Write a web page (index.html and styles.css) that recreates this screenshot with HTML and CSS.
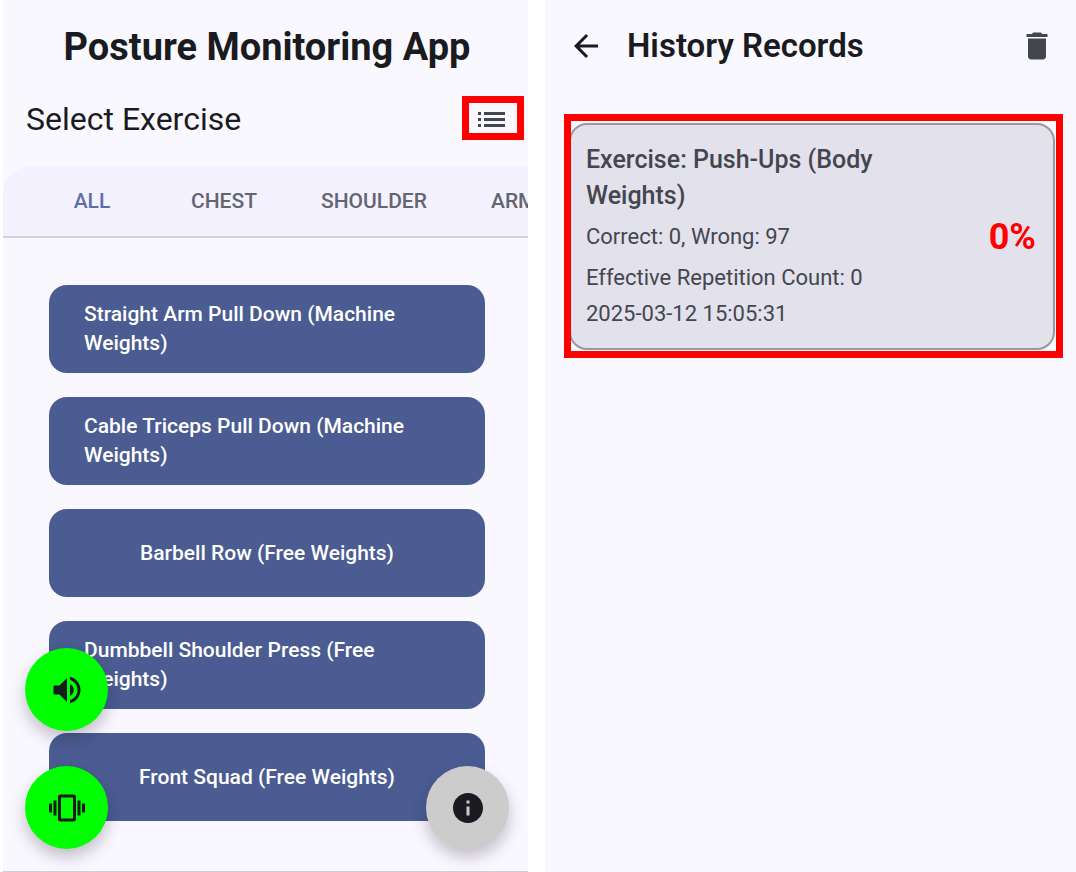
FILE: index.html
```html
<!DOCTYPE html>
<html lang="en">
<head>
<meta charset="utf-8">
<title>Posture Monitoring App</title>
<link rel="stylesheet" href="styles.css">
</head>
<body>
<div class="screens">
  <main class="screen home">
    <h1 class="app-title">Posture Monitoring App</h1>
    <div class="select-row">
      <h2 class="select-title">Select Exercise</h2>
      <button class="history-button" type="button" aria-label="History records">
        <svg class="list-icon" viewBox="0 0 27 15" aria-hidden="true"><path d="M0 0h3v3H0zM6 0h21v3H6zM0 6h3v3H0zM6 6h21v3H6zM0 12h3v3H0zM6 12h21v3H6z"/></svg>
      </button>
    </div>
    <nav class="tabs" aria-label="Exercise category">
      <button class="tab tab-active" type="button">ALL</button>
      <button class="tab" type="button">CHEST</button>
      <button class="tab" type="button">SHOULDER</button>
      <button class="tab" type="button">ARM</button>
    </nav>
    <div class="exercises">
      <button class="exercise" type="button"><span>Straight Arm Pull Down (Machine Weights)</span></button>
      <button class="exercise" type="button"><span>Cable Triceps Pull Down (Machine Weights)</span></button>
      <button class="exercise" type="button"><span>Barbell Row (Free Weights)</span></button>
      <button class="exercise" type="button"><span>Dumbbell Shoulder Press (Free Weights)</span></button>
      <button class="exercise" type="button"><span>Front Squad (Free Weights)</span></button>
    </div>
    <div class="fab-stack">
      <button class="fab fab-on" type="button" aria-label="Sound">
        <svg class="fab-icon" viewBox="0 0 24 24" aria-hidden="true"><path d="M3 9v6h4l5 5V4L7 9H3zm11-1v8c1.500-.700 2.500-2.200 2.500-4S15.500 8.700 14 8zm0-4.800v2.100c2.900.9 5 3.500 5 6.700s-2.100 5.800-5 6.700v2.100c4-.9 7-4.500 7-8.800s-3-7.900-7-8.800z"/></svg>
      </button>
      <button class="fab fab-on" type="button" aria-label="Vibration">
        <svg class="fab-icon" viewBox="0 0 24 24" aria-hidden="true"><path d="M0 15h2V9H0v6zm3 2h2V7H3v10zm19-8v6h2V9h-2zm-3 8h2V7h-2v10zM16.500 3h-9C6.670 3 6 3.670 6 4.500v15c0 .83.670 1.500 1.500 1.500h9c.83 0 1.500-.670 1.500-1.500v-15c0-.83-.670-1.500-1.500-1.500zM16 19H8V5h8v14z"/></svg>
      </button>
    </div>
    <button class="fab fab-info" type="button" aria-label="Information">
      <svg class="fab-icon" viewBox="0 0 24 24" aria-hidden="true"><path d="M12 2C6.480 2 2 6.480 2 12s4.480 10 10 10 10-4.480 10-10S17.520 2 12 2zm1 15h-2v-6h2v6zm0-8h-2V7h2v2z"/></svg>
    </button>
  </main>

  <section class="screen history">
    <header class="history-bar">
      <button class="icon-button" type="button" aria-label="Back">
        <svg class="bar-icon" viewBox="0 0 24 24" aria-hidden="true"><path d="M20 11H7.830l5.590-5.590L12 4l-8 8 8 8 1.410-1.410L7.830 13H20v-2z"/></svg>
      </button>
      <h2 class="history-title">History Records</h2>
      <button class="icon-button icon-muted" type="button" aria-label="Delete all">
        <svg class="bar-icon" viewBox="0 0 24 24" aria-hidden="true"><path d="M6 19c0 1.100.9 2 2 2h8c1.100 0 2-.9 2-2V7H6v12zM19 4h-3.500l-1-1h-5l-1 1H5v2h14V4z"/></svg>
      </button>
    </header>
    <div class="highlight">
      <article class="record">
        <div class="record-text">
          <h3 class="record-name">Exercise: Push-Ups (Body Weights)</h3>
          <p class="record-line">Correct: 0, Wrong: 97</p>
          <p class="record-line record-group">Effective Repetition Count: 0</p>
          <p class="record-line">2025-03-12 15:05:31</p>
        </div>
        <strong class="record-score">0%</strong>
      </article>
    </div>
  </section>
</div>
</body>
</html>
```
FILE: styles.css
```css
* { box-sizing: border-box; }

body {
  margin: 0;
  background: #ffffff;
  color: #1a1b20;
  font-family: Roboto, "Liberation Sans", sans-serif;
}

h1, h2, h3, p { margin: 0; }

button {
  margin: 0;
  padding: 0;
  border: 0;
  background: none;
  color: inherit;
  font: inherit;
  cursor: pointer;
}

svg { display: block; fill: currentColor; }

.screens {
  display: grid;
  grid-template-columns: 525fr 531fr;
  gap: 17px;
  min-height: 100vh;
  padding-left: 3px;
}

.screen {
  position: relative;
  min-width: 0;
  background: #f9f8ff;
}

.home {
  display: flex;
  flex-direction: column;
  border-bottom: 1px solid #cfced6;
}

.app-title {
  padding-top: 24px;
  padding-left: 3px;
  font-size: 38px;
  line-height: 46px;
  font-weight: 700;
  text-align: center;
}

.select-row {
  display: flex;
  align-items: center;
  justify-content: space-between;
  padding: 26px 4px 26px 23px;
}

.select-title {
  padding-top: 2px;
  font-size: 32px;
  line-height: 42px;
  font-weight: 400;
}

.history-button {
  display: flex;
  align-items: center;
  justify-content: center;
  width: 62px;
  height: 44px;
  padding: 2px 4px 0 0;
  border: 7px solid #ff0000;
  color: #44464f;
}

.list-icon { width: 27px; height: 15px; }

.tabs {
  display: flex;
  flex-shrink: 0;
  height: 72px;
  padding-left: 22px;
  overflow: hidden;
  border-bottom: 2px solid #d2d1dc;
  border-radius: 28px 0 0 0;
  background: #f4f2ff;
}

.tab {
  flex-shrink: 0;
  min-width: 128px;
  padding: 0 32px;
  color: #636570;
  font-size: 21px;
  font-weight: 500;
}

.tab:first-child { min-width: 134px; }

.tab:last-child { min-width: 0; }

.tab-active { color: #5b6fa8; }

.exercises {
  display: flex;
  flex-direction: column;
  gap: 24px;
  padding: 47px 43px 48px 46px;
}

.exercise {
  display: flex;
  align-items: center;
  justify-content: center;
  min-height: 88px;
  padding: 0 35px;
  border-radius: 18px;
  background: #4a5c92;
  color: #ffffff;
  font-size: 21px;
  line-height: 29px;
  font-weight: 500;
  text-align: left;
}

.fab-stack {
  position: absolute;
  left: 22px;
  bottom: 22px;
  display: flex;
  flex-direction: column;
  gap: 35px;
}

.fab {
  display: flex;
  align-items: center;
  justify-content: center;
  width: 83px;
  height: 83px;
  border-radius: 50%;
  color: #1a1b20;
  box-shadow: 0 8px 16px rgba(40, 20, 40, 0.26);
}

.fab-on { background: #00ff00; }

.fab-info {
  position: absolute;
  right: 19px;
  bottom: 22px;
  background: #cccccc;
}

.fab-icon { width: 36px; height: 36px; }

.history-bar {
  display: flex;
  align-items: center;
  padding: 24px 21px 0 23px;
}

.icon-button { flex-shrink: 0; }
.icon-muted { color: #44464f; }
.bar-icon { width: 36px; height: 36px; }

.history-title {
  flex: 1;
  padding-left: 23px;
  font-size: 33px;
  line-height: 44px;
  font-weight: 600;
}

.highlight {
  margin: 46px 13px 0 19px;
  padding: 2px 1px 1px 0;
  overflow: hidden;
  border: 7px solid #ff0000;
}

.record {
  display: flex;
  align-items: center;
  justify-content: space-between;
  margin-left: -2px;
  padding: 17px 17px 16px 15px;
  border: 2px solid #999a9e;
  border-radius: 18px;
  background: #e2e1ec;
  color: #44464f;
}

.record-text { max-width: 330px; }

.record-name {
  font-size: 25px;
  line-height: 36px;
  font-weight: 500;
}

.record-line {
  padding-top: 5px;
  font-size: 22px;
  line-height: 36px;
}

.record-group + .record-line { padding-top: 0; }

.record-score {
  color: #ff0000;
  font-size: 36px;
  line-height: 44px;
  font-weight: 700;
}
```
